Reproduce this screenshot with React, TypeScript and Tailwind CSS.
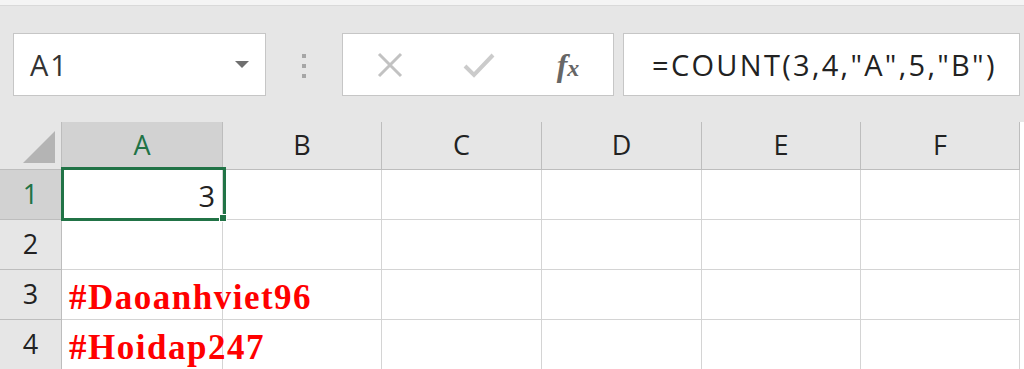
import React from 'react';

const cols = [
  { name: 'A', w: 'w-[161px]' },
  { name: 'B', w: 'w-[159px]' },
  { name: 'C', w: 'w-[160px]' },
  { name: 'D', w: 'w-[160px]' },
  { name: 'E', w: 'w-[159px]' },
  { name: 'F', w: 'w-[159px]' },
];

const redText = "font-['Liberation_Serif',serif] font-bold text-[35px] tracking-[1.5px] text-[#ff0000] pl-[7px] pt-[7px]";

const rows: { n: string; a?: React.ReactNode; h: string }[] = [
  { n: '1', h: 'h-[50px]', a: <span className="block w-full text-right pr-[7px] pt-[3px] text-[29px] text-[#222]">3</span> },
  { n: '2', h: 'h-[50px]' },
  { n: '3', h: 'h-[50px]', a: <span className={redText}>#Daoanhviet96</span> },
  { n: '4', h: 'h-[50px]', a: <span className={redText}>#Hoidap247</span> },
];

export default function App() {
  return (
    <div className="w-[1024px] h-[369px] overflow-hidden bg-white font-['Open_Sans',sans-serif] text-[#333]">
      {/* ribbon edge */}
      <div className="h-[6px] bg-[#f4f4f4] border-b border-[#d9d9d9]" />

      {/* formula bar */}
      <div className="h-[116px] bg-[#e6e6e6] flex items-start pt-[27px] pl-[13px] pr-[4px]">
        <div className="w-[253px] h-[63px] bg-white border border-[#c6c6c6] flex items-center pl-[16px] pr-[16px]">
          <span className="text-[29px] tracking-[2px] flex-1">A1</span>
          <svg width="14" height="8" viewBox="0 0 14 8"><path d="M0 0h14L7 7z" fill="#6f6f6f" /></svg>
        </div>
        <div className="w-[76px] flex flex-col items-center gap-[6px] pt-[21px]">
          <span className="w-[4px] h-[4px] bg-[#a6a6a6]" />
          <span className="w-[4px] h-[4px] bg-[#a6a6a6]" />
          <span className="w-[4px] h-[4px] bg-[#a6a6a6]" />
        </div>
        <div className="w-[272px] h-[63px] bg-white border border-[#c6c6c6] flex items-center">
          <div className="w-[92px] flex justify-center pl-[2px]">
            <svg width="28" height="26" viewBox="0 0 28 26"><path d="M3 2L25 24M25 2L3 24" stroke="#c2c2c2" strokeWidth="3" /></svg>
          </div>
          <div className="w-[88px] flex justify-center">
            <svg width="32" height="28" viewBox="0 0 32 28"><path d="M2 15L11 24L30 4" stroke="#cbcbcb" strokeWidth="4" fill="none" /></svg>
          </div>
          <div className="w-[90px] flex justify-center">
            <span className="font-['Liberation_Serif',serif] italic font-bold text-[32px] text-[#666] leading-none">f<span className="text-[24px]">x</span></span>
          </div>
        </div>
        <div className="w-[9px]" />
        <div className="flex-1 h-[63px] bg-white border border-[#c6c6c6] flex items-center pl-[28px]">
          <span className="text-[29px] tracking-[2.3px] text-[#222]">=COUNT(3,4,"A",5,"B")</span>
        </div>
      </div>

      {/* sheet */}
      <div className="relative">
        <div className="flex h-[48px] bg-[#e6e6e6]">
          <div className="w-[62px] border-r border-b border-[#bdbdbd] flex items-end justify-end pr-[6px] pb-[6px]">
            <svg width="32" height="32" viewBox="0 0 32 32"><path d="M32 0V32H0z" fill="#b4b4b4" /></svg>
          </div>
          {cols.map((c) => (
            <div
              key={c.name}
              className={`${c.w} ${c.name === 'A' ? 'bg-[#d2d2d2] text-[#217346]' : 'text-[#222]'} border-r border-b border-[#bdbdbd] flex items-center justify-center text-[27px]`}
            >
              {c.name}
            </div>
          ))}
          <div className="flex-1 bg-white" />
        </div>
        {rows.map((r) => (
          <div key={r.n} className={`flex ${r.h}`}>
            <div
              className={`w-[62px] ${r.n === '1' ? 'bg-[#d2d2d2] text-[#217346]' : 'bg-[#e6e6e6] text-[#222]'} border-r border-b border-[#bdbdbd] flex items-center justify-center text-[27px]`}
            >
              {r.n}
            </div>
            {cols.map((c) => (
              <div
                key={c.name}
                className={`${c.w} border-r border-b border-[#d4d4d4] flex items-center whitespace-nowrap ${c.name === 'A' ? 'overflow-visible' : ''}`}
              >
                {c.name === 'A' ? r.a : null}
              </div>
            ))}
          </div>
        ))}

        {/* selection */}
        <div className="absolute left-[61px] top-[45px] w-[165px] h-[54px] border-[3px] border-[#217346]" />
        <div className="absolute left-[219px] top-[92px] w-[8px] h-[8px] bg-[#217346] border border-white" />
      </div>
    </div>
  );
}
